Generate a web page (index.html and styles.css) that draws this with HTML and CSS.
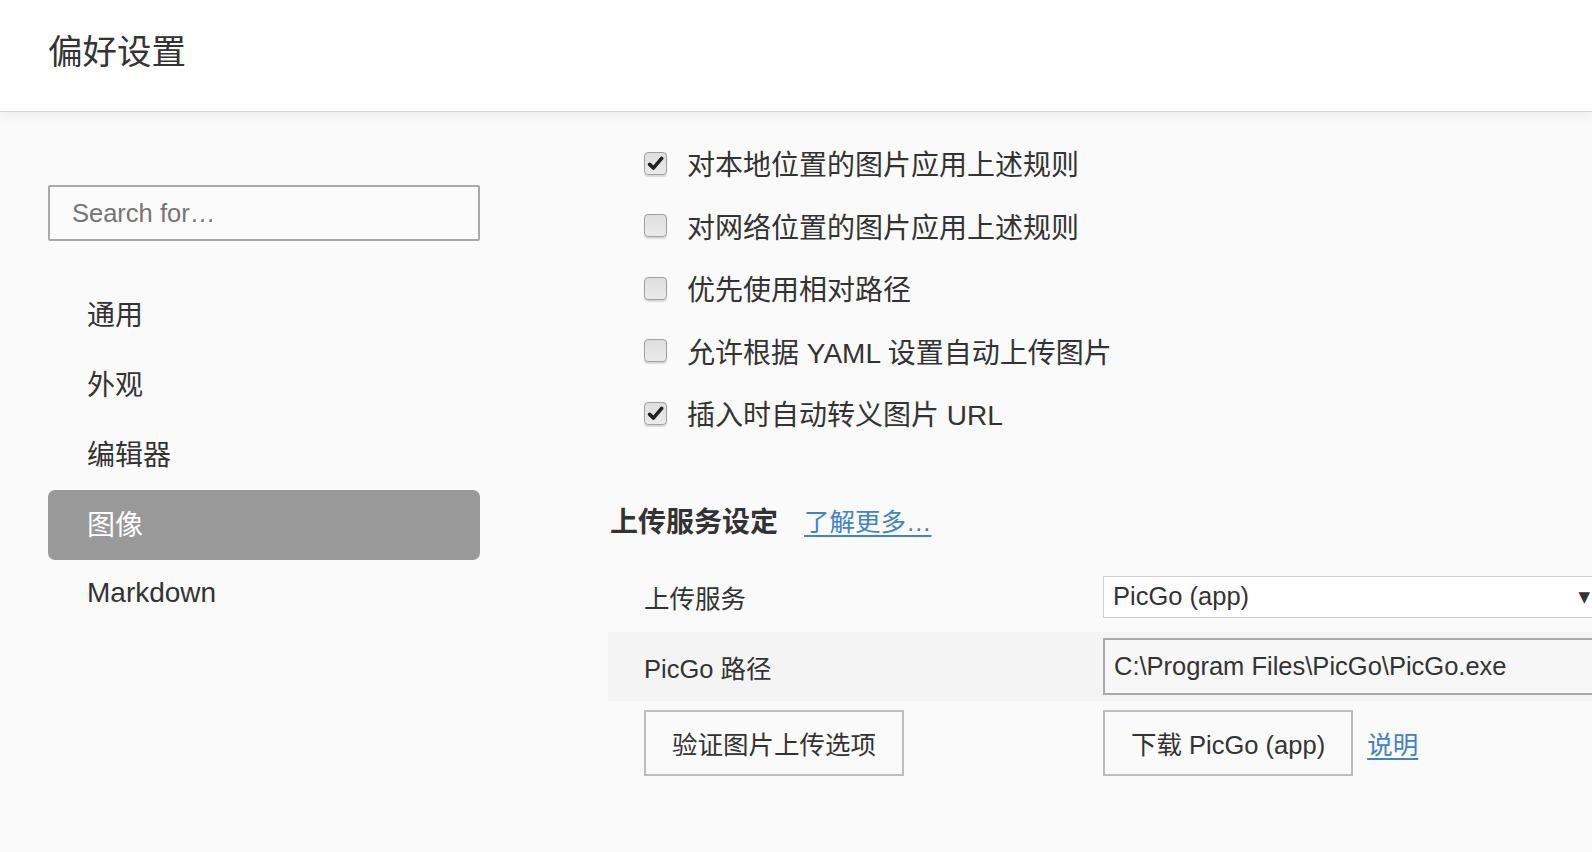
FILE: index.html
```html
<!DOCTYPE html>
<html lang="zh-CN">
<head>
<meta charset="utf-8">
<title>偏好设置</title>
<link rel="stylesheet" href="styles.css">
</head>
<body>
<header class="topbar">
  <h1 class="title">偏好设置</h1>
</header>
<div class="main">
  <aside class="sidebar">
    <div class="search"><span class="placeholder">Search for…</span></div>
    <nav class="nav">
      <div class="nav-item">通用</div>
      <div class="nav-item">外观</div>
      <div class="nav-item">编辑器</div>
      <div class="nav-item active">图像</div>
      <div class="nav-item">Markdown</div>
    </nav>
  </aside>
  <section class="content">
    <div class="checks">
      <label class="check-row"><span class="cb checked"><svg viewBox="0 0 16 16" width="17" height="17"><path d="M2.5 8.8 L6 12.3 L13.8 3.2" fill="none" stroke="#222" stroke-width="3.4" stroke-linecap="round" stroke-linejoin="round"/></svg></span><span>对本地位置的图片应用上述规则</span></label>
      <label class="check-row"><span class="cb"></span><span>对网络位置的图片应用上述规则</span></label>
      <label class="check-row"><span class="cb"></span><span>优先使用相对路径</span></label>
      <label class="check-row"><span class="cb"></span><span>允许根据 YAML 设置自动上传图片</span></label>
      <label class="check-row"><span class="cb checked"><svg viewBox="0 0 16 16" width="17" height="17"><path d="M2.5 8.8 L6 12.3 L13.8 3.2" fill="none" stroke="#222" stroke-width="3.4" stroke-linecap="round" stroke-linejoin="round"/></svg></span><span>插入时自动转义图片 URL</span></label>
    </div>
    <div class="section-head">
      <span class="section-title">上传服务设定</span>
      <a class="link more" href="#">了解更多…</a>
    </div>
    <div class="table">
      <div class="row">
        <div class="cell label">上传服务</div>
        <div class="cell ctrl"><div class="select"><span>PicGo (app)</span><span class="arrow">▼</span></div></div>
      </div>
      <div class="row band">
        <div class="cell label">PicGo 路径</div>
        <div class="cell ctrl"><div class="input">C:\Program Files\PicGo\PicGo.exe</div></div>
      </div>
      <div class="row buttons">
        <div class="cell label"><button class="btn">验证图片上传选项</button></div>
        <div class="cell ctrl"><button class="btn">下载 PicGo (app)</button><a class="link doc" href="#">说明</a></div>
      </div>
    </div>
  </section>
</div>
</body>
</html>
```
FILE: styles.css
```css
html, body {
  margin: 0;
  padding: 0;
}
body {
  width: 1592px;
  height: 852px;
  overflow: hidden;
  background: #fafafa;
  color: #333;
  font-family: "Liberation Sans", "Noto Sans CJK SC", sans-serif;
}
.topbar {
  height: 111px;
  background: #fff;
  border-bottom: 1px solid #d2d2d2;
  box-shadow: 0 2px 12px rgba(0, 0, 0, 0.07);
  display: flex;
  align-items: center;
  position: relative;
  z-index: 1;
}
.title {
  margin: 0 0 6px 48px;
  font-size: 34.5px;
  font-weight: normal;
  color: #333;
  line-height: 1;
}
.main {
  display: flex;
}
.sidebar {
  width: 432px;
  margin-left: 48px;
  padding-top: 73px;
  flex: none;
}
.search {
  height: 52px;
  border: 2px solid #a9a9a9;
  border-radius: 2px;
  background: #fbfbfb;
  display: flex;
  align-items: center;
  padding-left: 22px;
}
.placeholder {
  font-size: 25.5px;
  color: #757575;
}
.nav {
  margin-top: 39px;
}
.nav-item {
  height: 70px;
  box-sizing: border-box;
  padding-bottom: 4px;
  display: flex;
  align-items: center;
  padding-left: 39px;
  font-size: 28px;
  color: #333;
  border-radius: 7px;
}
.nav-item.active {
  background: #999;
  color: #fff;
}
.content {
  margin-left: 128px;
  flex: 1;
  min-width: 0;
}
.checks {
  padding-top: 20px;
  padding-left: 36px;
}
.check-row {
  height: 62.5px;
  display: flex;
  align-items: center;
  font-size: 28px;
  color: #333;
}
.cb {
  width: 21px;
  height: 21px;
  border: 1px solid #a0a0a0;
  border-radius: 4px;
  background: linear-gradient(#dedede, #ebebeb);
  box-shadow: 0 2px 1px rgba(0, 0, 0, 0.13);
  margin-right: 20px;
  display: flex;
  align-items: center;
  justify-content: center;
  flex: none;
}
.section-head {
  margin-top: 55px;
  height: 40px;
  display: flex;
  align-items: center;
}
.section-title {
  font-size: 28px;
  font-weight: bold;
  color: #333;
  margin-left: 2px;
}
.link {
  color: #4183c4;
  text-decoration: underline;
  text-underline-offset: 4px;
}
.more {
  margin-left: 26px;
  font-size: 25.5px;
}
.table {
  margin-top: 22px;
  width: 1100px;
}
.row {
  display: grid;
  grid-template-columns: 495px 1fr;
  height: 70px;
  align-items: center;
}
.row.band {
  background: #f4f4f4;
  height: 69px;
}
.row.buttons {
  height: 84px;
}
.cell.label {
  padding-left: 36px;
  font-size: 25.5px;
  color: #333;
}
.cell.ctrl {
  display: flex;
  align-items: center;
}
.select {
  width: 500px;
  height: 42px;
  box-sizing: border-box;
  border: 1px solid #cfcfcf;
  background: #fff;
  display: flex;
  align-items: center;
  justify-content: space-between;
  padding-left: 9px;
  font-size: 25.5px;
  color: #333;
}
.arrow {
  font-family: "DejaVu Sans", sans-serif;
  font-size: 15px;
  color: #333;
  margin-right: 12px;
}
.input {
  width: 520px;
  height: 57px;
  box-sizing: border-box;
  border: 2px solid #a9a9a9;
  background: #f7f7f7;
  display: flex;
  align-items: center;
  padding-left: 9px;
  font-size: 25.5px;
  color: #333;
}
.btn {
  height: 66px;
  padding: 0 26px;
  border: 2px solid #bdbdbd;
  background: #fafafa;
  font-family: "Liberation Sans", "Noto Sans CJK SC", sans-serif;
  font-size: 25.5px;
  color: #333;
  border-radius: 0;
}
.doc {
  margin-left: 14px;
  font-size: 25.5px;
}
```
